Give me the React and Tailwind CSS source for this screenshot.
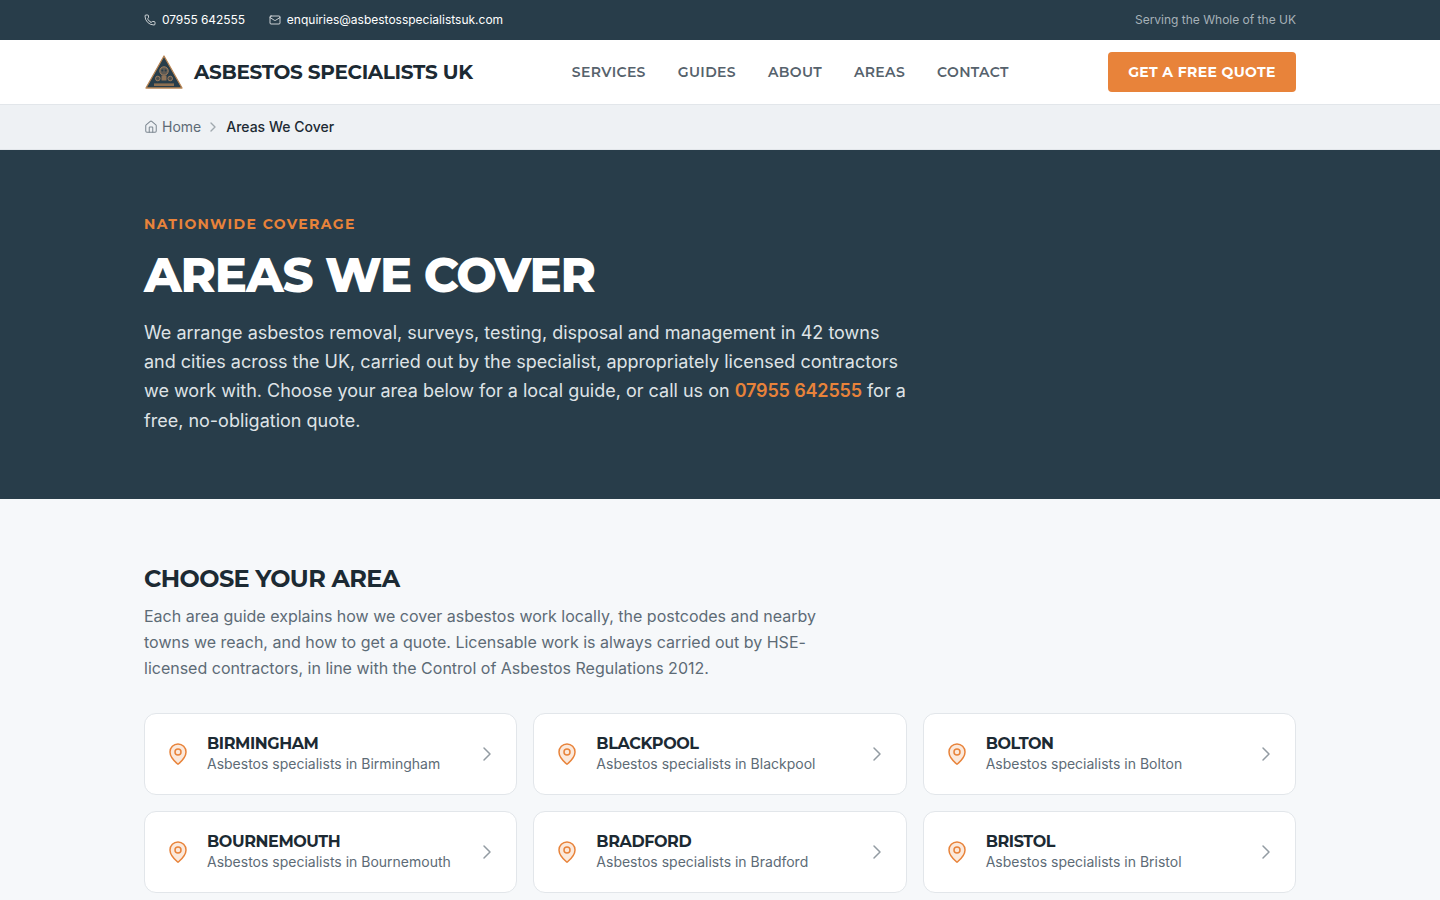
import React from 'react'
import { Phone, Mail, House, ChevronRight, MapPin } from 'lucide-react'

const heading = "font-['Montserrat','Inter',sans-serif]"

const areas = ['Birmingham', 'Blackpool', 'Bolton', 'Bournemouth', 'Bradford', 'Bristol']
const navItems = ['Services', 'Guides', 'About', 'Areas', 'Contact']

const Logo = () => (
    <svg width="40" height="36" viewBox="0 0 40 36" className="shrink-0">
        <path d="M20 2 L38 34 L2 34 Z" fill="#283d4a" stroke="#b98554" strokeWidth="1.3" strokeLinejoin="round" />
        <circle cx="20" cy="17" r="4.2" fill="#5d5a54" stroke="#a9825f" strokeWidth="1" />
        <circle cx="18.3" cy="16.4" r="1" fill="#283d4a" />
        <circle cx="21.7" cy="16.4" r="1" fill="#283d4a" />
        <circle cx="13.8" cy="24.5" r="2.3" fill="#4d4f4e" stroke="#a9825f" strokeWidth="0.9" />
        <circle cx="26.2" cy="24.5" r="2.3" fill="#4d4f4e" stroke="#a9825f" strokeWidth="0.9" />
        <rect x="17.5" y="21.5" width="5" height="5" fill="#8d7359" />
        <rect x="10" y="29.4" width="20" height="2.6" fill="#b98554" opacity="0.7" />
    </svg>
)

const AreaCard = ({ name }) => (
    <a className="flex h-[82px] items-center rounded-xl border border-[#e2e6ea] bg-white pl-[21px] pr-[17px]">
        <MapPin size={24} strokeWidth={1.5} className="shrink-0 fill-[#fbe9dc] text-[#e8833a]" />
        <div className="mb-px ml-[17px] min-w-0 flex-1">
            <div className={`${heading} text-base font-bold uppercase leading-5 tracking-tight text-[#1c2a33]`}>{name}</div>
            <div className="text-sm leading-5 text-[#5d6b76]">Asbestos specialists in {name}</div>
        </div>
        <ChevronRight size={24} strokeWidth={1.5} className="shrink-0 text-[#929ba2]" />
    </a>
)

export default function App() {
    return (
        <div className="h-screen overflow-hidden bg-[#f6f8fa] font-['Inter',sans-serif]">
            <div className="h-10 bg-[#283d4a]">
                <div className="mx-auto flex h-full max-w-[1152px] items-center justify-between text-xs">
                    <div className="flex items-center gap-6 text-white">
                        <span className="flex items-center gap-1.5 tracking-[-0.08px]"><Phone size={12} strokeWidth={1.5} />07955 642555</span>
                        <span className="flex items-center gap-1.5"><Mail size={12} strokeWidth={1.5} />enquiries@asbestosspecialistsuk.com</span>
                    </div>
                    <span className="text-[#a6b1b8]">Serving the Whole of the UK</span>
                </div>
            </div>

            <header className="h-[65px] border-b border-[#e2e6ea] bg-white">
                <div className="mx-auto flex h-16 max-w-[1152px] items-center justify-between">
                    <div className="flex items-center gap-2.5">
                        <Logo />
                        <span className={`${heading} text-xl font-bold tracking-[-0.33px] text-[#1c2a33]`}>ASBESTOS SPECIALISTS UK</span>
                    </div>
                    <nav className={`${heading} flex items-center gap-8 text-sm font-semibold uppercase tracking-wide text-[#56626c]`}>
                        {navItems.map(item => <a key={item}>{item}</a>)}
                    </nav>
                    <button className={`${heading} h-10 w-[188px] rounded bg-[#e8833a] text-sm font-bold uppercase tracking-wide text-white`}>
                        Get a Free Quote
                    </button>
                </div>
            </header>

            <div className="h-[45px] border-b border-[#e2e6ea] bg-[#eef1f4]">
                <div className="mx-auto flex h-full max-w-[1152px] items-center text-sm">
                    <House size={14} strokeWidth={1.75} className="text-[#7d8891]" />
                    <span className="ml-1 text-[#5d6b76]">Home</span>
                    <ChevronRight size={16} strokeWidth={2} className="ml-1 mr-[5px] text-[#a0a8ae]" />
                    <span className="font-medium text-[#1c2a33]">Areas We Cover</span>
                </div>
            </div>

            <section className="h-[349px] bg-[#283d4a] pt-16">
                <div className="mx-auto max-w-[1152px]">
                    <div className={`${heading} text-sm font-bold uppercase leading-5 tracking-widest text-[#e8833a]`}>Nationwide Coverage</div>
                    <h1 className={`${heading} mt-4 text-5xl font-extrabold uppercase leading-[50px] tracking-tight text-white`}>Areas We Cover</h1>
                    <p className="mt-[17.8px] max-w-[768px] text-lg leading-[29.25px] text-[#dfe3e6]">
                        We arrange asbestos removal, surveys, testing, disposal and management in 42 towns and cities across the UK, carried out by the specialist, appropriately licensed contractors we work with. Choose your area below for a local guide, or call us on <span className="font-semibold tracking-[-0.15px] text-[#e8833a]">07955 642555</span> for a free, no-obligation quote.
                    </p>
                </div>
            </section>

            <section className="pt-16">
                <div className="mx-auto max-w-[1152px]">
                    <h2 className={`${heading} text-2xl font-bold uppercase leading-8 tracking-tight text-[#1c2a33]`}>Choose Your Area</h2>
                    <p className="mt-2 max-w-[672px] text-base leading-[26px] text-[#5d6b76]">
                        Each area guide explains how we cover asbestos work locally, the postcodes and nearby towns we reach, and how to get a quote. Licensable work is always carried out by HSE-licensed contractors, in line with the Control of Asbestos Regulations 2012.
                    </p>
                    <div className="mt-8 grid grid-cols-3 gap-4">
                        {areas.map(name => <AreaCard key={name} name={name} />)}
                    </div>
                </div>
            </section>
        </div>
    )
}
